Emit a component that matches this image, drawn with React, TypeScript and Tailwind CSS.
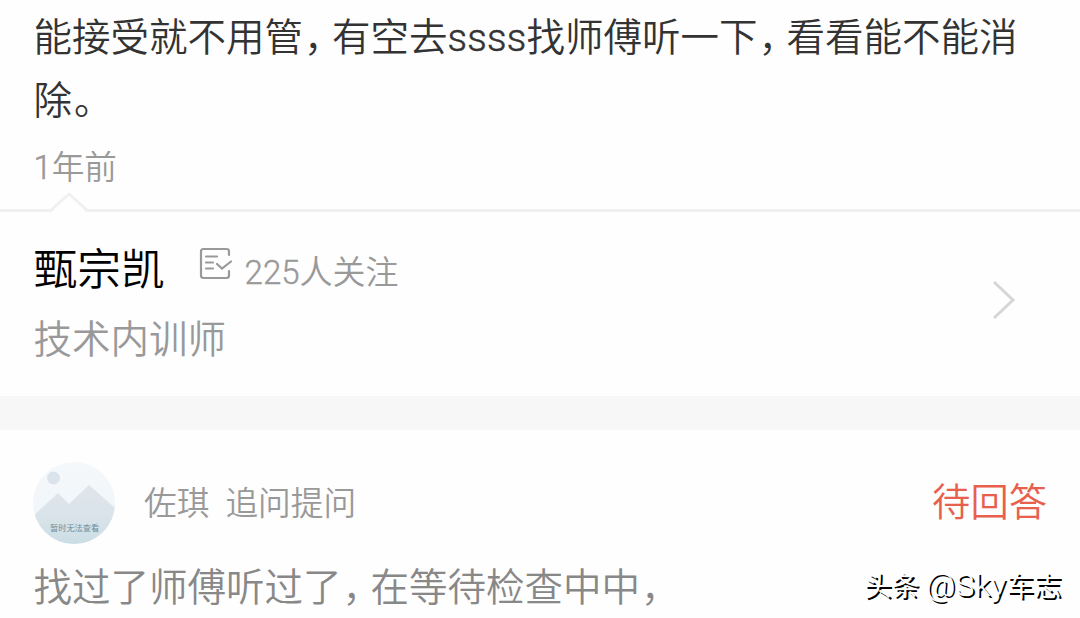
import React from 'react';

/** Fullwidth comma with a tighter advance than the other characters */
const Comma: React.FC = () => <span className="pl-[1px] tracking-[-10.5px]">，</span>;

/** Small document icon with a tick, shown before the follower count */
const FollowIcon: React.FC = () => (
  <svg width="34" height="34" viewBox="0 0 34 34" fill="none" stroke="#999999" strokeWidth="2.2" strokeLinecap="round">
    <path d="M30 8V4.500Q30 2 27.500 2H4.500Q2 2 2 4.500V28.500Q2 31 4.500 31H27.500Q30 31 30 28.500V24" />
    <path d="M7 9.500H18M7 15.500H14M7 21.500H14" />
    <path d="M18 17L23 21.500L32 14.500" />
  </svg>
);

const Avatar: React.FC = () => (
  <div className="relative h-[82px] w-[82px] overflow-hidden rounded-full">
    <svg className="block" width="82" height="82" viewBox="0 0 82 82">
      <defs>
        <linearGradient id="sky" x1="0" y1="0" x2="0" y2="1">
          <stop offset="0" stopColor="#f5f8fa" />
          <stop offset="1" stopColor="#eef5fa" />
        </linearGradient>
        <linearGradient id="hill" x1="0" y1="0" x2="0" y2="1">
          <stop offset="0" stopColor="#dfe4ea" />
          <stop offset="0.500" stopColor="#dae4ea" />
          <stop offset="1" stopColor="#cbdee4" />
        </linearGradient>
      </defs>
      <rect width="82" height="82" fill="url(#sky)" />
      <circle cx="20.500" cy="16" r="6.500" fill="#dbe4ed" />
      <path d="M0 54L25 31L36 42L56 23L82 46V82H0Z" fill="url(#hill)" />
    </svg>
    <span className="absolute left-[17px] top-[60px] whitespace-nowrap text-[8.2px] font-normal leading-[12px] text-[#6d8f9f]">
      暂时无法查看
    </span>
  </div>
);

const App: React.FC = () => {
  return (
    <div className="relative h-[618px] w-[1080px] overflow-hidden bg-[#fefefe] font-['Roboto','Noto_Sans_CJK_SC',sans-serif] font-[350]">
      {/* Answer */}
      <section className="h-[209px] pl-[33.5px] pt-[6px]">
        <p className="whitespace-nowrap text-[38.5px] leading-[63px] text-[#333333]">
          能接受就不用管
          <Comma />
          有空去<span className="tracking-[0.2px] [-webkit-text-stroke:0.5px_#333]">ssss</span>找师傅听一下
          <Comma />
          看看能不能消
          <br />
          除<span className="pl-[2px]">。</span>
        </p>
        <p className="mt-[13px] text-[32.7px] leading-[46px] text-[#999999]">
          <span className="[-webkit-text-stroke:0.5px_#999]">1</span>年前
        </p>
      </section>

      {/* Expert */}
      <section className="relative flex h-[187px] items-center justify-between border-t-3 border-[#f0f0f0] pl-[33.5px] pr-[62px]">
        <svg className="absolute left-[48px] top-[-20px]" width="42" height="22" viewBox="0 0 42 22">
          <path d="M2 22L21 2L40 22Z" fill="#fefefe" />
          <path d="M0 19H2L21 2L40 19H42" fill="none" stroke="#f0f0f0" strokeWidth="2.5" />
        </svg>
        <div className="h-full pt-[26px]">
          <div className="flex h-[64px] items-center">
            <span className="text-[43.7px] leading-[64px] text-black">甄宗凯</span>
            <span className="ml-[34px] mt-[-13px]">
              <FollowIcon />
            </span>
            <span className="ml-[12px] mt-[5px] text-[33px] leading-[48px] text-[#999999]">
              <span className="[-webkit-text-stroke:0.4px_#999]">225</span>人关注
            </span>
          </div>
          <p className="mt-[11px] text-[38.5px] leading-[54px] text-[#999999]">技术内训师</p>
        </div>
        <svg className="mt-[-9px]" width="28" height="42" viewBox="0 0 28 42" fill="none" stroke="#d6d6d6" strokeWidth="3">
          <path d="M4 3L23 21L4 39" />
        </svg>
      </section>

      <div className="h-[34px] bg-[#f7f7f7]" />

      {/* Follow-up question */}
      <section className="pl-[33px] pr-[33px] pt-[32px]">
        <div className="flex h-[82px] items-center">
          <Avatar />
          <span className="ml-[29px] mt-[2px] text-[32.7px] leading-[48px] text-[#999999]">佐琪</span>
          <span className="ml-[16px] mt-[2px] text-[32.7px] leading-[48px] text-[#999999]">追问提问</span>
          <span className="ml-auto text-[38.3px] leading-[54px] text-[#e8604c]">待回答</span>
        </div>
        <p className="mt-[14px] whitespace-nowrap pl-[0.5px] text-[38.5px] leading-[60px] text-[#888888]">
          找过了师傅听过了
          <Comma />
          在等待检查中中
          <Comma />
        </p>
      </section>

      {/* Watermark */}
      <div className="absolute left-[864px] top-[565px] whitespace-nowrap text-[27.5px] font-normal leading-[40px] text-white [text-shadow:2px_2px_0_#000]">
        头条 <span className="text-[32px] font-[350] tracking-[0.3px]">@Sky</span>车志
      </div>
    </div>
  );
};

export default App;
